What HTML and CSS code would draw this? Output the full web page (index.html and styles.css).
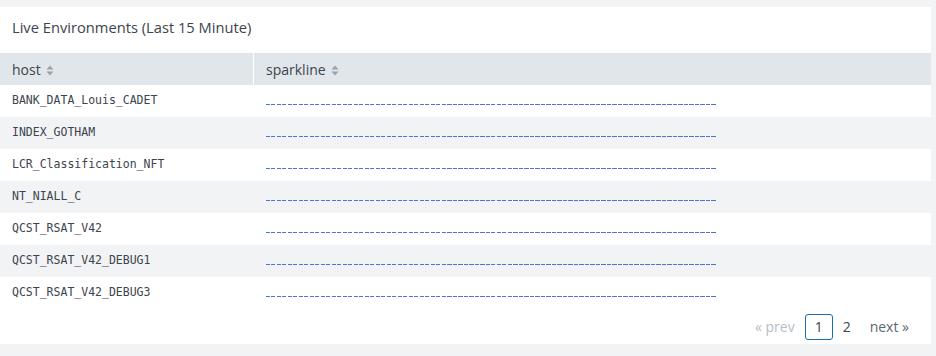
FILE: index.html
```html
<!DOCTYPE html>
<html>
<head>
<meta charset="utf-8">
<link rel="stylesheet" href="styles.css">
</head>
<body>
<div class="panel">
  <h2 class="title">Live Environments (Last 15 Minute)</h2>
  <table class="tbl">
    <thead>
      <tr>
        <th class="col-host">host <span class="sort"><svg width="8" height="11" viewBox="0 0 8 11"><path d="M4 0.5 L7.5 4.5 H0.5 Z M4 10.5 L7.5 6.5 H0.5 Z" fill="#9aa3ab"/></svg></span></th>
        <th>sparkline <span class="sort"><svg width="8" height="11" viewBox="0 0 8 11"><path d="M4 0.5 L7.5 4.5 H0.5 Z M4 10.5 L7.5 6.5 H0.5 Z" fill="#9aa3ab"/></svg></span></th>
      </tr>
    </thead>
    <tbody>
      <tr><td class="host">BANK_DATA_Louis_CADET</td><td><span class="spark"></span></td></tr>
      <tr><td class="host">INDEX_GOTHAM</td><td><span class="spark"></span></td></tr>
      <tr><td class="host">LCR_Classification_NFT</td><td><span class="spark"></span></td></tr>
      <tr><td class="host">NT_NIALL_C</td><td><span class="spark"></span></td></tr>
      <tr><td class="host">QCST_RSAT_V42</td><td><span class="spark"></span></td></tr>
      <tr><td class="host">QCST_RSAT_V42_DEBUG1</td><td><span class="spark"></span></td></tr>
      <tr><td class="host">QCST_RSAT_V42_DEBUG3</td><td><span class="spark"></span></td></tr>
    </tbody>
  </table>
  <div class="pager">
    <span class="pg prev">« prev</span>
    <span class="pg cur">1</span>
    <span class="pg num">2</span>
    <span class="pg next">next »</span>
  </div>
</div>
</body>
</html>
```

FILE: styles.css
```css
html, body {
  margin: 0;
  padding: 0;
  background: #f2f3f5;
}
body {
  padding: 7px 5px 0 0;
  font-family: "Open Sans", "Liberation Sans", sans-serif;
  color: #3c444d;
}
.panel {
  background: #fff;
  height: 337px;
  box-sizing: border-box;
}
.title {
  margin: 0;
  height: 46px;
  box-sizing: border-box;
  padding: 10px 0 0 12px;
  font-size: 14.7px;
  font-weight: 400;
  line-height: 20px;
  color: #3c444d;
}
.tbl {
  width: 100%;
  border-collapse: collapse;
}
.tbl th {
  background: #e1e6ea;
  height: 32px;
  padding: 0 12px;
  text-align: left;
  font-weight: 400;
  font-size: 14px;
  color: #3c444d;
}
.tbl th.col-host {
  width: 229px;
  border-right: 1px solid #fff;
}
.sort {
  display: inline-block;
  vertical-align: -1px;
  margin-left: 2px;
}
.sort svg { display: block; }
.tbl td {
  height: 32px;
  padding: 0 12px;
  font-family: "DejaVu Sans Mono", "Liberation Mono", monospace;
  font-size: 11.5px;
  color: #3c444d;
  vertical-align: top;
  padding-top: 8px;
  box-sizing: border-box;
}
.tbl tbody tr:nth-child(even) td {
  background: #f2f3f5;
}
.spark {
  display: block;
  width: 450px;
  height: 1px;
  margin-top: 11px;
  background: repeating-linear-gradient(90deg, #4a78d0 0 4px, transparent 4px 5.5px);
}
.pager {
  display: flex;
  justify-content: flex-end;
  align-items: center;
  padding: 5px 16px 0 0;
  font-size: 14px;
}
.pg {
  display: inline-block;
  line-height: 24px;
  padding: 0 6px;
}
.prev { color: #b6bec6; margin-right: 4px; }
.cur {
  border: 1px solid #1a6dab;
  border-radius: 3px;
  width: 28px;
  box-sizing: border-box;
  text-align: center;
  padding: 0;
  color: #3c444d;
}
.num { margin: 0 7px 0 4px; }
.next { color: #5c6773; }
```
